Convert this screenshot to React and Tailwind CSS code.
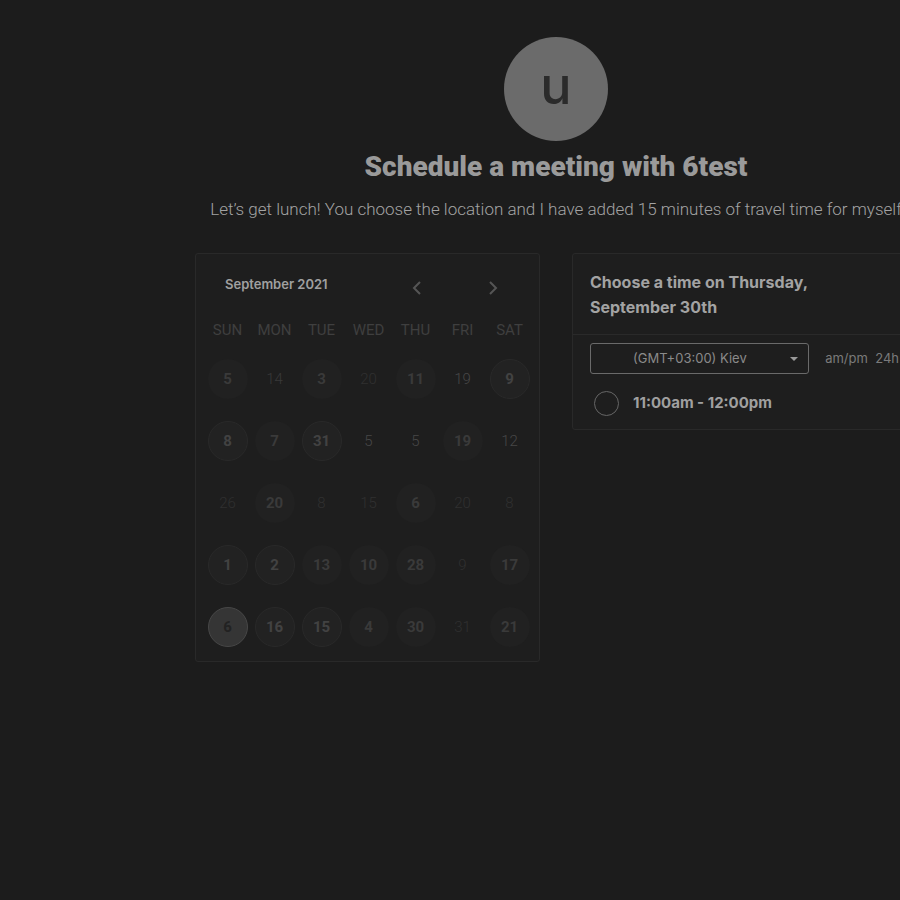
import React from "react";

const rows = [
  [["5","c"],["14","m"],["3","c"],["20","d"],["11","c"],["19","l"],["9","t"]],
  [["8","t"],["7","c"],["31","t"],["5","l"],["5","l"],["19","c"],["12","l"]],
  [["26","d"],["20","c"],["8","d"],["15","d"],["6","c"],["20","d"],["8","d"]],
  [["1","t"],["2","t"],["13","c"],["10","c"],["28","c"],["9","d"],["17","c"]],
  [["6","s"],["16","t"],["15","t"],["4","c"],["30","c"],["31","d"],["21","c"]],
];

function Day({ n, k }) {
  if (k === "c")
    return (
      <div className="w-10 h-10 rounded-full bg-[#212121] flex items-center justify-center text-[15px] font-bold text-[#3a3a3a]">{n}</div>
    );
  if (k === "t")
    return (
      <div className="w-10 h-10 rounded-full bg-[#222222] border border-[#292929] flex items-center justify-center text-[15px] font-bold text-[#424242]">{n}</div>
    );
  if (k === "s")
    return (
      <div className="w-10 h-10 rounded-full bg-[#353535] border border-[#474747] flex items-center justify-center text-[15px] font-bold text-[#222222]">{n}</div>
    );
  const col = k === "l" ? "text-[#474747]" : k === "m" ? "text-[#393939]" : "text-[#303030]";
  return <div className={`w-10 h-10 flex items-center justify-center text-[15px] font-light ${col}`}>{n}</div>;
}

export default function App() {
  return (
    <div className="w-full h-[900px] overflow-hidden bg-[#1c1c1c]" style={{ fontFamily: "Roboto, 'Liberation Sans', sans-serif" }}>
      <div className="w-[1112px] flex flex-col items-center pt-[37px]">
        <div className="w-[104px] h-[104px] rounded-full bg-[#6b6b6b] flex items-center justify-center text-[52px] font-medium text-[#2b2b2b] leading-none pb-[6px]" style={{ fontFamily: "Inter, sans-serif" }}>u</div>
        <h1 className="mt-[8px] text-[28px] font-black text-[#9a9a9a] leading-[36px]">Schedule a meeting with 6test</h1>
        <p className="mt-[12px] text-[17px] font-light text-[#a3a3a3] leading-[24px] whitespace-nowrap">Let’s get lunch! You choose the location and I have added 15 minutes of travel time for myself</p>
        <div className="mt-[32px] flex gap-[32px] items-start" style={{ fontFamily: "Inter, sans-serif" }}>
          <div className="w-[345px] h-[409px] rounded-[3px] border border-[#292929] bg-[#1e1e1e] px-[8px] pt-[19px]">
            <div className="flex items-center h-[24px]">
              <div className="ml-[21px] text-[13px] font-semibold text-[#a0a0a0]">September 2021</div>
              <svg className="ml-[84px] mt-[6px]" width="10" height="16" viewBox="0 0 10 16"><path d="M8 2 L2 8 L8 14" stroke="#555" strokeWidth="2" fill="none" /></svg>
              <svg className="ml-[66px] mt-[6px]" width="10" height="16" viewBox="0 0 10 16"><path d="M2 2 L8 8 L2 14" stroke="#555" strokeWidth="2" fill="none" /></svg>
            </div>
            <div className="grid grid-cols-7 w-[329px] mt-[23px]">
              {["SUN","MON","TUE","WED","THU","FRI","SAT"].map((d) => (
                <div key={d} className="text-center text-[15px] text-[#3f3f3f] h-[20px] leading-[20px]" style={{ fontFamily: "Roboto, sans-serif" }}>{d}</div>
              ))}
            </div>
            <div className="grid grid-cols-7 w-[329px] mt-[19px]" style={{ fontFamily: "Roboto, sans-serif" }}>
              {rows.map((r, i) =>
                r.map(([n, k], j) => (
                  <div key={i + "-" + j} className="h-[62px] flex items-start justify-center">
                    <Day n={n} k={k} />
                  </div>
                ))
              )}
            </div>
          </div>
          <div className="w-[345px] rounded-[3px] border border-[#292929] bg-[#1e1e1e]">
            <div className="px-[17px] pt-[16px] pb-[14px] border-b border-[#2a2a2a] text-[16px] font-bold text-[#a3a3a3] leading-[25px]">
              Choose a time on Thursday,<br />September 30th
            </div>
            <div className="px-[17px] pt-[8px] flex items-center">
              <div className="w-[220px] h-[31px] rounded-[3px] border border-[#6a6a6a] flex items-center relative">
                <span className="ml-[42px] text-[13px] text-[#8a8a8a]">(GMT+03:00) Kiev</span>
                <svg className="absolute right-[10px] top-[13px]" width="8" height="4" viewBox="0 0 8 4"><path d="M0 0 L8 0 L4 4 Z" fill="#9a9a9a" /></svg>
              </div>
              <span className="ml-[16px] text-[13px] text-[#7a7a7a] whitespace-nowrap">am/pm&nbsp;&nbsp;24h</span>
            </div>
            <div className="px-[21px] pt-[17px] pb-[13px] flex items-center">
              <div className="w-[25px] h-[25px] rounded-full border-[1.5px] border-[#666]"></div>
              <span className="ml-[14px] text-[15px] font-bold text-[#a0a0a0]">11:00am - 12:00pm</span>
            </div>
          </div>
        </div>
      </div>
    </div>
  );
}
